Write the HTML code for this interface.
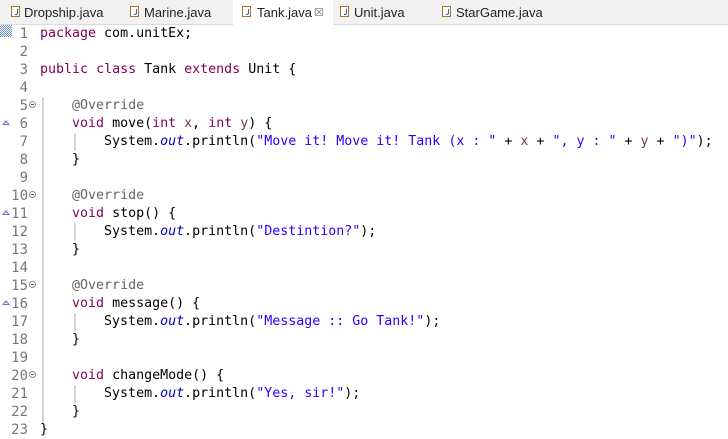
<!DOCTYPE html>
<html><head><meta charset="utf-8"><style>
body{margin:0;width:728px;height:435px;overflow:hidden;background:#fff;font-family:"Liberation Sans",sans-serif;position:relative}
.tabs{position:absolute;left:0;top:0;width:728px;height:24px;background:#f2f2f2;border-bottom:1px solid #dadada}
.tab{position:absolute;top:0;height:24px;font-size:13px;line-height:26px;color:#222}
.tab.act{background:#fff;height:25px}
.ic{position:absolute;top:6px;width:9px;height:11px;border:1px solid #9a7a2a;background:#fff;box-sizing:border-box}
.ic:after{content:"";position:absolute;left:3px;top:2px;width:2px;height:5px;border-right:1.5px solid #3a63a8;border-bottom:1.5px solid #3a63a8;border-radius:0 0 2px 0}
.code{position:absolute;left:0;top:25px;font-family:"DejaVu Sans Mono",monospace;font-size:13.3px}
.ln{position:absolute;left:0;width:28px;text-align:right;color:#787878;height:18px;line-height:18px;font-size:14px}
.l{position:absolute;left:40px;height:18px;line-height:18px;white-space:pre;color:#000}
.k{color:#7f0055}
.a{color:#646464}
.s{color:#2a00ff}
.o{color:#0000c0;font-style:italic}
.p{color:#6a3e3e}
.bar{position:absolute;background:#d4d4d4;width:2px}
.fold{position:absolute;left:29px;width:7px;height:7px;border:1px solid #8a8a9a;border-radius:50%;box-sizing:border-box}
.fold:after{content:"";position:absolute;left:1px;top:2px;width:3px;height:1px;background:#556}
.ov{position:absolute;left:2px;width:0;height:0;border-left:4px solid transparent;border-right:4px solid transparent;border-bottom:5px solid #7a6ad0}
.ov:after{content:"";position:absolute;left:-2px;top:2px;border-left:2px solid transparent;border-right:2px solid transparent;border-bottom:2px solid #fff}
</style></head><body>
<div class="tabs">
<div class="tab" style="left:0;width:120px"><span class="ic" style="left:11px"></span><span style="position:absolute;left:24px">Dropship.java</span></div>
<div class="tab" style="left:120px;width:112px"><span class="ic" style="left:10px"></span><span style="position:absolute;left:24px">Marine.java</span></div>
<div class="tab act" style="left:233px;width:100px"><span class="ic" style="left:9px"></span><span style="position:absolute;left:24px">Tank.java</span><span style="position:absolute;left:81px;color:#777;font-size:11px">&#x2612;</span></div>
<div class="tab" style="left:334px;width:100px"><span class="ic" style="left:6px"></span><span style="position:absolute;left:20px">Unit.java</span></div>
<div class="tab" style="left:434px;width:120px"><span class="ic" style="left:8px"></span><span style="position:absolute;left:22px">StarGame.java</span></div>
</div>
<div style="position:absolute;left:0;top:25px;width:12px;height:12px;background:repeating-conic-gradient(#6a8fd0 0 25%,#fff 0 50%) 0 0/2px 2px"></div>
<div class="bar" style="left:42px;top:97px;height:326px"></div>
<div class="bar" style="left:74px;top:133px;height:18px"></div>
<div class="bar" style="left:74px;top:223px;height:18px"></div>
<div class="bar" style="left:74px;top:313px;height:18px"></div>
<div class="bar" style="left:74px;top:385px;height:18px"></div>
<div class="fold" style="top:101px"></div>
<div class="fold" style="top:191px"></div>
<div class="fold" style="top:281px"></div>
<div class="fold" style="top:371px"></div>
<div class="ov" style="top:120px"></div>
<div class="ov" style="top:210px"></div>
<div class="ov" style="top:300px"></div>
<div class="code">
<div class="ln" style="top:0">1</div><div class="l" style="top:0"><span class="k">package</span> com.unitEx;</div>
<div class="ln" style="top:18px">2</div>
<div class="ln" style="top:36px">3</div><div class="l" style="top:36px"><span class="k">public</span> <span class="k">class</span> Tank <span class="k">extends</span> Unit {</div>
<div class="ln" style="top:54px">4</div>
<div class="ln" style="top:72px">5</div><div class="l" style="top:72px">    <span class="a">@Override</span></div>
<div class="ln" style="top:90px">6</div><div class="l" style="top:90px">    <span class="k">void</span> move(<span class="k">int</span> <span class="p">x</span>, <span class="k">int</span> <span class="p">y</span>) {</div>
<div class="ln" style="top:108px">7</div><div class="l" style="top:108px">        System.<span class="o">out</span>.println(<span class="s">"Move it! Move it! Tank (x : "</span> + <span class="p">x</span> + <span class="s">", y : "</span> + <span class="p">y</span> + <span class="s">")"</span>);</div>
<div class="ln" style="top:126px">8</div><div class="l" style="top:126px">    }</div>
<div class="ln" style="top:144px">9</div>
<div class="ln" style="top:162px">10</div><div class="l" style="top:162px">    <span class="a">@Override</span></div>
<div class="ln" style="top:180px">11</div><div class="l" style="top:180px">    <span class="k">void</span> stop() {</div>
<div class="ln" style="top:198px">12</div><div class="l" style="top:198px">        System.<span class="o">out</span>.println(<span class="s">"Destintion?"</span>);</div>
<div class="ln" style="top:216px">13</div><div class="l" style="top:216px">    }</div>
<div class="ln" style="top:234px">14</div>
<div class="ln" style="top:252px">15</div><div class="l" style="top:252px">    <span class="a">@Override</span></div>
<div class="ln" style="top:270px">16</div><div class="l" style="top:270px">    <span class="k">void</span> message() {</div>
<div class="ln" style="top:288px">17</div><div class="l" style="top:288px">        System.<span class="o">out</span>.println(<span class="s">"Message :: Go Tank!"</span>);</div>
<div class="ln" style="top:306px">18</div><div class="l" style="top:306px">    }</div>
<div class="ln" style="top:324px">19</div>
<div class="ln" style="top:342px">20</div><div class="l" style="top:342px">    <span class="k">void</span> changeMode() {</div>
<div class="ln" style="top:360px">21</div><div class="l" style="top:360px">        System.<span class="o">out</span>.println(<span class="s">"Yes, sir!"</span>);</div>
<div class="ln" style="top:378px">22</div><div class="l" style="top:378px">    }</div>
<div class="ln" style="top:396px">23</div><div class="l" style="top:396px">}</div>
</div>
</body></html>
